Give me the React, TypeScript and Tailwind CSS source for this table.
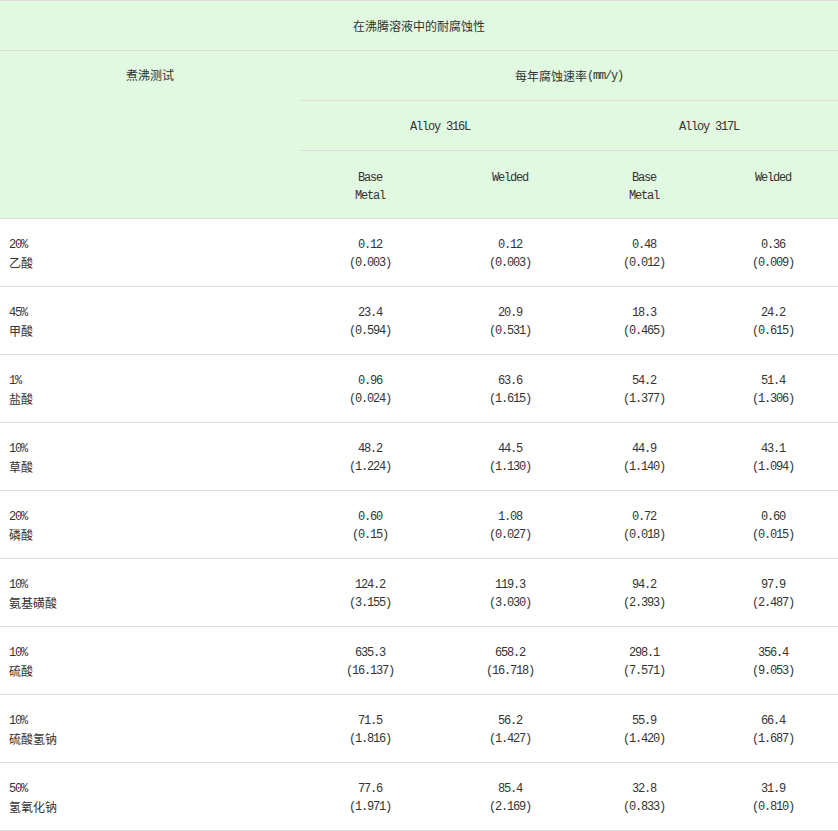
import React from "react";

const rows: { pct: string; name: string; vals: [string, string][] }[] = [
  { pct: "20%", name: "乙酸", vals: [["0.12", "(0.003)"], ["0.12", "(0.003)"], ["0.48", "(0.012)"], ["0.36", "(0.009)"]] },
  { pct: "45%", name: "甲酸", vals: [["23.4", "(0.594)"], ["20.9", "(0.531)"], ["18.3", "(0.465)"], ["24.2", "(0.615)"]] },
  { pct: "1%", name: "盐酸", vals: [["0.96", "(0.024)"], ["63.6", "(1.615)"], ["54.2", "(1.377)"], ["51.4", "(1.306)"]] },
  { pct: "10%", name: "草酸", vals: [["48.2", "(1.224)"], ["44.5", "(1.130)"], ["44.9", "(1.140)"], ["43.1", "(1.094)"]] },
  { pct: "20%", name: "磷酸", vals: [["0.60", "(0.15)"], ["1.08", "(0.027)"], ["0.72", "(0.018)"], ["0.60", "(0.015)"]] },
  { pct: "10%", name: "氨基磺酸", vals: [["124.2", "(3.155)"], ["119.3", "(3.030)"], ["94.2", "(2.393)"], ["97.9", "(2.487)"]] },
  { pct: "10%", name: "硫酸", vals: [["635.3", "(16.137)"], ["658.2", "(16.718)"], ["298.1", "(7.571)"], ["356.4", "(9.053)"]] },
  { pct: "10%", name: "硫酸氢钠", vals: [["71.5", "(1.816)"], ["56.2", "(1.427)"], ["55.9", "(1.420)"], ["66.4", "(1.687)"]] },
  { pct: "50%", name: "氢氧化钠", vals: [["77.6", "(1.971)"], ["85.4", "(2.169)"], ["32.8", "(0.833)"], ["31.9", "(0.810)"]] },
];

// latin text: mono at 6px advance, like the half-width glyphs of the source page
const Latin = ({ children }: { children: React.ReactNode }) => (
  <span className="font-['Liberation_Mono',monospace] tracking-[-1.2px]">{children}</span>
);

export default function App() {
  return (
    <div className="w-[838px] bg-white text-[12px] leading-[18px] text-[#333] font-['Noto_Sans_CJK_SC',sans-serif]">
      <div className="grid grid-cols-[300px_140px_140px_128px_130px] border-t border-[#ddd]">
        <div className="col-span-5 h-[50px] flex items-center justify-center bg-[#e1f8e1] border-b border-[#ddd]">
          在沸腾溶液中的耐腐蚀性
        </div>

        <div className="row-span-3 bg-[#e1f8e1] border-b border-[#ddd] pt-[15px] text-center">煮沸测试</div>
        <div className="col-span-4 h-[50px] flex items-center justify-center bg-[#e1f8e1] border-b border-[#ddd]">
          每年腐蚀速率<Latin>(mm/y)</Latin>
        </div>

        <div className="col-span-2 h-[50px] pt-[2px] flex items-center justify-center bg-[#e1f8e1] border-b border-[#ddd]">
          <Latin>Alloy 316L</Latin>
        </div>
        <div className="col-span-2 h-[50px] pt-[2px] flex items-center justify-center bg-[#e1f8e1] border-b border-[#ddd]">
          <Latin>Alloy 317L</Latin>
        </div>

        {["Base Metal", "Welded", "Base Metal", "Welded"].map((h, i) => (
          <div key={i} className="h-[68px] flex items-start justify-center pt-[18px] bg-[#e1f8e1] border-b border-[#ddd]">
            <div className="flex flex-col items-center">
              {h.split(" ").map((w) => (
                <Latin key={w}>{w}</Latin>
              ))}
            </div>
          </div>
        ))}

        {rows.map((r, ri) => (
          <React.Fragment key={ri}>
            <div className="h-[68px] pt-[2px] flex flex-col justify-center pl-[9px] border-b border-[#ddd]">
              <Latin>{r.pct}</Latin>
              <span>{r.name}</span>
            </div>
            {r.vals.map(([a, b], vi) => (
              <div key={vi} className="h-[68px] pt-[2px] flex flex-col items-center justify-center border-b border-[#ddd]">
                <Latin>{a}</Latin>
                <Latin>{b}</Latin>
              </div>
            ))}
          </React.Fragment>
        ))}
      </div>
    </div>
  );
}
